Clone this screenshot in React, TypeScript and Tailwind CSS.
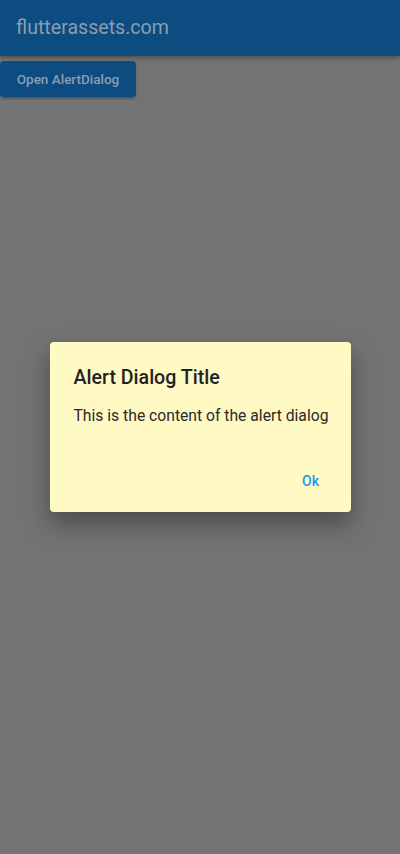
export default function App() {
  return (
    <div
      className="relative w-[400px] h-[854px] bg-[#737373] flex flex-col"
      style={{ fontFamily: "Roboto, 'Noto Sans', sans-serif" }}
    >
      <div className="h-[56px] bg-[#0d4c80] flex items-center px-4 shadow-[0_2px_4px_rgba(0,0,0,0.3)]">
        <span className="text-[19.6px] text-[#8b9db0]">flutterassets.com</span>
      </div>
      <div className="pt-[5px]">
        <button className="h-[36px] w-[136px] bg-[#0d4c80] rounded-[4px] text-[13.5px] font-medium text-[#8b9db0] shadow-[0_2px_2px_rgba(0,0,0,0.25)]">
          Open AlertDialog
        </button>
      </div>

      {/* dialog overlay */}
      <div className="absolute inset-0 flex items-center justify-center">
        <div className="w-[301px] h-[170px] bg-[#fff9c4] rounded-[4px] shadow-[0_12px_24px_rgba(0,0,0,0.35)] flex flex-col">
          <div className="px-6 pt-[22px] text-[19.6px] font-medium text-[#222] leading-[28px]">
            Alert Dialog Title
          </div>
          <div className="pl-6 pr-2 pt-[14px] text-[15.7px] text-[#2a2a2a] leading-[20px] whitespace-nowrap">
            This is the content of the alert dialog
          </div>
          <div className="flex-1 flex items-end justify-end px-2 pb-[13px]">
            <button className="h-[36px] px-4 min-w-[64px] text-[14px] font-medium text-[#2196f3]">
              Ok
            </button>
          </div>
        </div>
      </div>
    </div>
  );
}
